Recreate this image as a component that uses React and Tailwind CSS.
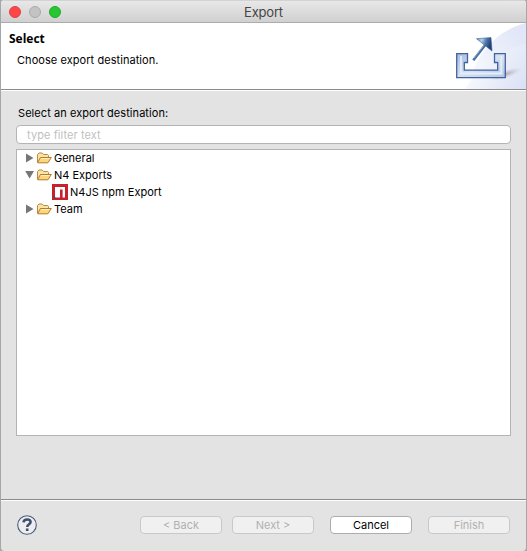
import React from "react";

function Folder() {
  return (
    <svg width="16" height="16" viewBox="0 0 16 16" className="shrink-0">
      <path d="M1.5 12V4.5L3 3h3.2l1.3 1.5h4.2l.8.9V7" fill="#fbe3a6" stroke="#b98a45" />
      <path d="M1.6 12.8L4.4 7.5h10.9l-3.4 5.3H2z" fill="#fad67d" stroke="#b67a2c" strokeLinejoin="round" />
      <path d="M5 8.5h8.6" stroke="#fff0b8" />
    </svg>
  );
}

function Arrow({ open }) {
  return (
    <svg width="9" height="10" viewBox="0 0 9 10" className="mt-[3px] shrink-0">
      <path d={open ? "M0.2 1h8.8L4.6 8.6z" : "M1 0.5v9L8.5 5z"} fill="#767676" />
    </svg>
  );
}

function NpmIcon() {
  return (
    <svg width="16" height="16" viewBox="0 0 16 16" className="shrink-0">
      <path d="M0 0h16v16H0z" fill="#c4232d" />
      <path d="M3 3h10v10.5h-2.4V5.5H8v8H3z" fill="#fff" />
      <path d="M1 11l3 2.7H1.8z" fill="#155a96" />
    </svg>
  );
}

function Row({ label, open }) {
  return (
    <div className="flex h-[17px] items-start pl-2 leading-[17px]">
      <Arrow open={open} />
      <span className="ml-[2px] flex"><Folder /></span>
      <span className="ml-[2px] whitespace-nowrap">{label}</span>
    </div>
  );
}

function Banner() {
  return (
    <svg width="109" height="66" viewBox="0 0 109 66" className="shrink-0">
      <defs>
        <linearGradient id="sweep" x1="0" y1="1" x2="1" y2="0.3">
          <stop offset="0" stopColor="#fff" />
          <stop offset="0.5" stopColor="#eef1fb" />
          <stop offset="1" stopColor="#e1e7f8" />
        </linearGradient>
        <linearGradient id="sweep2" x1="0" y1="0.2" x2="1" y2="1">
          <stop offset="0" stopColor="#fff" stopOpacity="0.5" />
          <stop offset="1" stopColor="#d3dbf3" />
        </linearGradient>
        <linearGradient id="metal" x1="0" y1="0" x2="1" y2="1">
          <stop offset="0" stopColor="#a5bde0" />
          <stop offset="0.5" stopColor="#d6e1f2" />
          <stop offset="1" stopColor="#b2c6e5" />
        </linearGradient>
        <linearGradient id="head" x1="0" y1="0" x2="1" y2="0.3">
          <stop offset="0" stopColor="#5f86b8" />
          <stop offset="0.35" stopColor="#b4d2ec" />
          <stop offset="0.65" stopColor="#4f77aa" />
          <stop offset="1" stopColor="#1c3b72" />
        </linearGradient>
        <radialGradient id="shade">
          <stop offset="0" stopColor="#94848f" stopOpacity="0.65" />
          <stop offset="1" stopColor="#c8c0d0" stopOpacity="0" />
        </radialGradient>
      </defs>
      <path d="M109 0C82 7 61 26 49 66h60z" fill="url(#sweep)" />
      <path d="M109 21C84 25 64 43 48 66h61z" fill="url(#sweep2)" opacity="0.75" />
      <ellipse cx="89" cy="51" rx="17" ry="4.5" fill="url(#shade)" transform="rotate(-18 89 51)" />
      <path d="M39.7 30.7h10.8v8.8h-3.2v7.7h33.4v-7.7h-3.2v-8.8h10.8v24H39.7z" fill="url(#metal)" stroke="#42639f" strokeWidth="1.3" />
      <path d="M44 33v17.5h40.3V33" fill="none" stroke="#e6edf8" strokeWidth="1.8" />
      <path d="M56.3 37.3L69 21" stroke="#496f9f" strokeWidth="2.6" />
      <path d="M57 35.2L68 21" stroke="#8fb0d5" strokeWidth="0.8" />
      <path d="M59.5 15.7L74 14.6L75 28z" fill="url(#head)" stroke="#3b5e96" strokeWidth="0.6" />
    </svg>
  );
}

function Button({ label, tone = "text-[#b0b0b0] bg-[#f0f0f0] border-[#c8c8c8]", space = "" }) {
  return (
    <button className={`flex h-[18px] w-[82px] shrink-0 items-center justify-center rounded-[4px] border p-0 text-[11px] leading-none ${tone} ${space}`}>
      {label}
    </button>
  );
}

export default function App() {
  return (
    <div className="h-[551px] w-[527px] bg-[#a8a8a8] font-['Inter','Liberation_Sans',sans-serif] text-[11px] text-black">
      <div className="flex h-full flex-col overflow-hidden rounded-t-[4px] rounded-b-[4px] border-x border-[#a6a6a6] bg-[#e3e3e3]">
        <div className="relative flex h-[23px] shrink-0 items-center justify-center border-t border-b border-t-[#d3d3d3] border-b-[#acacac] bg-linear-to-b from-[#e8e8e8] to-[#d0d0d0] pt-[2px] text-[13px] tracking-[-0.2px] text-[#454545]">
          <div className="absolute top-[5px] left-2 flex gap-2">
            <i className="size-3 rounded-full border border-[#e33e41] bg-[#fc4648]" />
            <i className="size-3 rounded-full border border-[#aaa] bg-[#c3c3c3]" />
            <i className="size-3 rounded-full border border-[#1faa2b] bg-[#28c732]" />
          </div>
          <span>Export</span>
        </div>
        <div className="flex h-[66px] shrink-0 justify-between bg-white">
          <div className="pl-2">
            <div className="mt-2 h-4 font-['Open_Sans','Noto_Sans',sans-serif] text-[12px] leading-4 font-bold">Select</div>
            <div className="mt-[5px] ml-2 h-4 leading-4 tracking-[0.06px] whitespace-nowrap">Choose export destination.</div>
          </div>
          <Banner />
        </div>
        <div className="h-[2px] shrink-0 border-t border-b border-t-[#8b8b8b] border-b-white" />
        <main className="flex h-[408px] shrink-0 flex-col px-[15px] pt-[14px]">
          <div className="h-4 pl-[2px] leading-4 tracking-[0.07px]">Select an export destination:</div>
          <input placeholder="type filter text" className="mt-1 h-[19px] w-full shrink-0 rounded-[4px] border border-[#b4b4b4] bg-white px-[10px] py-0 text-[11px] tracking-[0.08px] placeholder:text-[#bfbfbf]" />
          <div className="mt-[5px] h-[287px] shrink-0 border border-[#b4b4b4] bg-white">
            <Row label="General" />
            <Row label="N4 Exports" open />
            <div className="flex h-[17px] items-start pl-[35px] leading-[17px]">
              <NpmIcon />
              <span className="ml-[2px]">N4JS npm Export</span>
            </div>
            <Row label="Team" />
          </div>
        </main>
        <div className="h-[2px] shrink-0 border-t border-b border-t-[#8b8b8b] border-b-white" />
        <footer className="flex flex-1 items-start pt-[15px] pl-4">
          <svg width="20" height="20" viewBox="0 0 20 20" className="-mt-px shrink-0">
            <circle cx="10" cy="10" r="9.3" fill="#ededed" stroke="#485b7d" strokeWidth="1.1" />
            <path d="M6.5 7.4c.2-2 1.6-3 3.6-3 2.2 0 3.5 1 3.5 2.6 0 2.2-3.4 2.3-3.4 5" fill="none" stroke="#3e4f70" strokeWidth="2.5" />
            <path d="M8.9 13.5h2.6v2.5H8.9z" fill="#3e4f70" />
          </svg>
          <Button label="< Back" space="ml-[103px]" />
          <Button label="Next >" space="ml-[10px]" />
          <Button label="Cancel" tone="text-black bg-white border-[#adadad]" space="ml-[16px]" />
          <Button label="Finish" space="ml-[16px]" />
        </footer>
      </div>
    </div>
  );
}
